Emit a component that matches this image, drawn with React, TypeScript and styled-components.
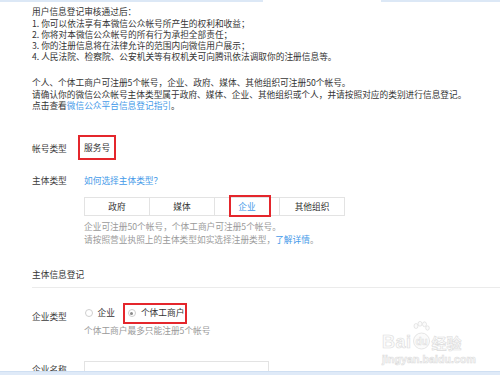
import React from 'react';
import styled, {createGlobalStyle} from 'styled-components';

const GlobalStyle = createGlobalStyle`
	body {
		margin: 0;
		background: #fff;
		font-family: "Noto Sans CJK SC", "Noto Sans", sans-serif;
		color: #353535;
	}
`;

const Screen = styled.div`
	position: relative;
	width: 500px;
	height: 375px;
	overflow: hidden;
	background: #fff;
`;

const TopStrip = styled.div`
	display: flex;
	height: 2px;
`;
const StripPiece = styled.div<{$w?: number}>`
	background: #dce8f6;
	${p => p.$w ? `width: ${p.$w}px;` : 'flex: 1;'}
`;
const StripGap = styled.div`
	width: 118px;
`;

const Page = styled.div`
	padding: 2px 0 0 32px;
	font-size: 8.7px;
	line-height: 11.3px;
`;

const Notice = styled.div`
	margin-top: 2.3px;
	white-space: nowrap;
`;
const Notice2 = styled(Notice)`
	margin-top: 14.5px;
`;
const Line = styled.div``;

const Link = styled.a`
	color: #459ae9;
	text-decoration: none;
`;

const FormRow = styled.div<{$top: number}>`
	display: grid;
	grid-template-columns: 52px 1fr;
	margin-top: ${p => p.$top}px;
`;
const Label = styled.div<{$pad?: number}>`
	padding-top: ${p => p.$pad || 0}px;
	color: #3a3a3a;
`;
const Value = styled.div`
	display: flex;
	flex-direction: column;
	align-items: flex-start;
`;

const Boxed = styled.span`
	display: inline-flex;
	align-items: center;
	height: 21px;
	padding: 0 4px 0 4px;
	margin-left: -6px;
	border: 2px solid #e4262c;
	color: #333;
`;

const Tabs = styled.div`
	display: flex;
	margin-top: 10.4px;
`;
const Tab = styled.div<{$active?: boolean}>`
	position: relative;
	width: 64px;
	height: 17px;
	display: flex;
	align-items: center;
	justify-content: center;
	border: 1px solid #e3e3e3;
	margin-left: -1px;
	&:first-child {
		margin-left: 0;
	}
	color: ${p => p.$active ? '#459ae9' : '#333'};
`;
const TabMark = styled.div`
	position: absolute;
	left: 14px;
	right: 8px;
	top: -3px;
	bottom: -2px;
	border: 2px solid #e4262c;
`;

const Hint = styled.div<{$top?: number}>`
	color: #9a9a9a;
	line-height: 13px;
	margin-top: ${p => p.$top || 0}px;
	white-space: nowrap;
`;

const SectionTitle = styled.div`
	margin-top: 22.8px;
	padding-bottom: 6.3px;
	border-bottom: 1px solid #ebebeb;
`;

const RadioGroup = styled.div`
	display: flex;
	align-items: center;
	height: 21px;
`;
const RadioItem = styled.label<{$marked?: boolean}>`
	display: flex;
	align-items: center;
	gap: 5px;
	height: 17px;
	padding: ${p => p.$marked ? '0 1px 0 3px' : '0'};
	margin-left: ${p => p.$marked ? '8px' : '0.5px'};
	border: ${p => p.$marked ? '2px solid #e4262c' : 'none'};
	color: #333;
	position: relative;
	top: 1px;
`;
const Circle = styled.span<{$on?: boolean}>`
	width: 6px;
	height: 6px;
	border-radius: 50%;
	border: 1px solid #cfcfcf;
	display: flex;
	align-items: center;
	justify-content: center;
	&::after {
		content: '';
		display: ${p => p.$on ? 'block' : 'none'};
		width: 3px;
		height: 3px;
		border-radius: 50%;
		background: #8a8a8a;
	}
`;

const TextInput = styled.div`
	width: 183px;
	height: 24px;
	border: 1px solid #e3e3e3;
	background: #fff;
`;

const BottomBar = styled.div`
	position: absolute;
	left: 0;
	right: 0;
	bottom: 0;
	height: 3px;
	background: #dfeaf8;
	border-top: 1px solid #cfdff2;
`;

const Watermark = styled.div`
	position: absolute;
	left: 382px;
	top: 321px;
	display: flex;
	flex-direction: column;
	align-items: flex-start;
	color: #fbfbfb;
	-webkit-text-stroke: 0.6px #dcdcdc;
	font-family: "Liberation Sans", Arial, sans-serif;
	pointer-events: none;
`;
const MarkTop = styled.div`
	display: flex;
	align-items: flex-end;
	height: 30px;
`;
const MarkBai = styled.span`
	font-size: 18px;
	font-weight: bold;
	line-height: 18px;
	letter-spacing: 0.5px;
`;
const MarkPaw = styled.span`
	display: flex;
	flex-direction: column;
	align-items: center;
	margin: 0 2px 0 0;
`;
const MarkJy = styled.span`
	font-family: "Noto Sans CJK SC", sans-serif;
	font-size: 15px;
	font-weight: bold;
	line-height: 17px;
`;
const MarkUrl = styled.div`
	font-size: 10.5px;
	font-weight: bold;
	margin-top: 2px;
	letter-spacing: 0.1px;
`;

function Paw() {
	return (
		<MarkPaw>
			<svg width="18" height="30" viewBox="0 0 18 30">
				<g fill="#fbfbfb" stroke="#dcdcdc" strokeWidth="0.7">
					<ellipse cx="4" cy="5" rx="2" ry="2.5"/>
					<ellipse cx="8" cy="2.8" rx="2" ry="2.4"/>
					<ellipse cx="12.5" cy="3.3" rx="2" ry="2.4"/>
					<ellipse cx="15.5" cy="7" rx="1.8" ry="2.2"/>
					<circle cx="9.5" cy="20" r="8"/>
				</g>
				<text x="9.5" y="23.5" textAnchor="middle" fontSize="10" fontWeight="bold" fill="#fbfbfb" stroke="#dcdcdc" strokeWidth="0.5" fontFamily="Liberation Sans, Arial, sans-serif">du</text>
			</svg>
		</MarkPaw>
	);
}

function App() {
	return (
		<Screen>
			<GlobalStyle/>
			<TopStrip>
				<StripPiece $w={263}/>
				<StripGap/>
				<StripPiece/>
			</TopStrip>
			<Page>
				<Notice>
					<Line>用户信息登记审核通过后：</Line>
					<Line>1. 你可以依法享有本微信公众帐号所产生的权利和收益；</Line>
					<Line>2. 你将对本微信公众帐号的所有行为承担全部责任；</Line>
					<Line>3. 你的注册信息将在法律允许的范围内向微信用户展示；</Line>
					<Line>4. 人民法院、检察院、公安机关等有权机关可向腾讯依法调取你的注册信息等。</Line>
				</Notice>
				<Notice2>
					<Line>个人、个体工商户可注册5个帐号，企业、政府、媒体、其他组织可注册50个帐号。</Line>
					<Line>请确认你的微信公众帐号主体类型属于政府、媒体、企业、其他组织或个人，并请按照对应的类别进行信息登记。</Line>
					<Line>点击查看<Link href="#">微信公众平台信息登记指引</Link>。</Line>
				</Notice2>

				<FormRow $top={23.5}>
					<Label $pad={8.3}>帐号类型</Label>
					<Value><Boxed>服务号</Boxed></Value>
				</FormRow>

				<FormRow $top={15.3}>
					<Label>主体类型</Label>
					<Value>
						<Link href="#">如何选择主体类型？</Link>
						<Tabs>
							<Tab>政府</Tab>
							<Tab>媒体</Tab>
							<Tab $active>企业<TabMark/></Tab>
							<Tab>其他组织</Tab>
						</Tabs>
						<Hint $top={4.5}>企业可注册50个帐号，个体工商户可注册5个帐号。</Hint>
						<Hint>请按照营业执照上的主体类型如实选择注册类型，<Link href="#">了解详情</Link>。</Hint>
					</Value>
				</FormRow>

				<SectionTitle>主体信息登记</SectionTitle>

				<FormRow $top={14}>
					<Label $pad={9.3}>企业类型</Label>
					<Value>
						<RadioGroup>
							<RadioItem><Circle/>企业</RadioItem>
							<RadioItem $marked><Circle $on/>个体工商户</RadioItem>
						</RadioGroup>
						<Hint $top={1.5}>个体工商户最多只能注册5个帐号</Hint>
					</Value>
				</FormRow>

				<FormRow $top={23.5}>
					<Label $pad={3.4}>企业名称</Label>
					<Value><TextInput/></Value>
				</FormRow>
			</Page>
			<Watermark>
				<MarkTop>
					<MarkBai>Bai</MarkBai>
					<Paw/>
					<MarkJy>经验</MarkJy>
				</MarkTop>
				<MarkUrl>jingyan.baidu.com</MarkUrl>
			</Watermark>
			<BottomBar/>
		</Screen>
	);
}

export default App;
